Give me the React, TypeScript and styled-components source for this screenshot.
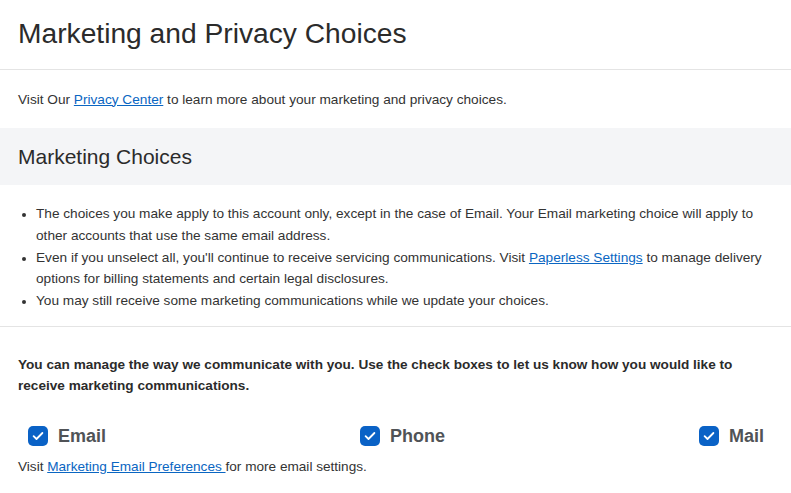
import React from "react";
import styled, { createGlobalStyle } from "styled-components";

const Global = createGlobalStyle`
  html, body { margin: 0; padding: 0; background: #ffffff; }
  body { font-family: "Liberation Sans", Arial, Helvetica, sans-serif; color: #333333; }
  * { box-sizing: border-box; }
`;

const Page = styled.div`
  width: 791px;
  display: flex;
  flex-direction: column;
`;

const Header = styled.header`
  height: 70px;
  padding: 0 18px;
  display: flex;
  align-items: center;
  border-bottom: 1px solid #e4e4e4;
`;

const Title = styled.h1`
  margin: 0;
  padding-bottom: 2px;
  font-size: 28.2px;
  font-weight: 400;
  color: #2b2b2b;
`;

const Intro = styled.p`
  margin: 0;
  height: 58px;
  padding: 0 18px;
  display: flex;
  align-items: center;
  font-size: 13.65px;
  color: #333333;
  & > span { white-space: pre; }
`;

const Link = styled.a`
  color: #0a66c2;
  text-decoration: underline;
  cursor: pointer;
`;

const Band = styled.div`
  height: 57px;
  background: #f4f5f7;
  padding: 0 18px;
  display: flex;
  align-items: center;
`;

const BandTitle = styled.h2`
  margin: 0;
  font-size: 21px;
  font-weight: 400;
  color: #2b2b2b;
`;

const List = styled.ul`
  margin: 0;
  padding: 18px 18px 14px 36px;
  border-bottom: 1px solid #e4e4e4;
  font-size: 13.65px;
  line-height: 21.75px;
  color: #333333;
  li::marker { font-size: 12px; }
`;

const Section = styled.section`
  padding: 27px 18px 0;
`;

const Lead = styled.p`
  margin: 0;
  font-size: 13.6px;
  font-weight: 700;
  line-height: 21px;
  color: #2b2b2b;
`;

const Options = styled.div`
  margin-top: 30px;
  padding: 0 9px 0 10px;
  display: flex;
  justify-content: space-between;
  align-items: center;
`;

const Option = styled.label`
  display: flex;
  align-items: center;
  gap: 10px;
  font-size: 18px;
  font-weight: 700;
  color: #505357;
  cursor: pointer;
`;

const Box = styled.span`
  width: 20px;
  height: 20px;
  border-radius: 5px;
  background: #0a62c6;
  display: flex;
  align-items: center;
  justify-content: center;
`;

const Footnote = styled.p`
  margin: 12px 0 0;
  font-size: 13.6px;
  color: #333333;
`;

const Check = () => (
  <Box>
    <svg width="12" height="10" viewBox="0 0 12 10" fill="none">
      <path d="M1.6 5.2 L4.5 8 L10.4 2" stroke="#ffffff" strokeWidth="1.8" strokeLinecap="round" strokeLinejoin="round" />
    </svg>
  </Box>
);

export default function App() {
  return (
    <Page>
      <Global />
      <Header>
        <Title>Marketing and Privacy Choices</Title>
      </Header>
      <Intro>
        <span>Visit Our </span>
        <Link>Privacy Center</Link>
        <span> to learn more about your marketing and privacy choices.</span>
      </Intro>
      <Band>
        <BandTitle>Marketing Choices</BandTitle>
      </Band>
      <List>
        <li>
          The choices you make apply to this account only, except in the case of Email. Your Email marketing choice will apply to other accounts that use the same email address.
        </li>
        <li>
          Even if you unselect all, you'll continue to receive servicing communications. Visit <Link>Paperless Settings</Link> to manage delivery options for billing statements and certain legal disclosures.
        </li>
        <li>You may still receive some marketing communications while we update your choices.</li>
      </List>
      <Section>
        <Lead>
          You can manage the way we communicate with you. Use the check boxes to let us know how you would like to receive marketing communications.
        </Lead>
        <Options>
          <Option>
            <Check />
            Email
          </Option>
          <Option>
            <Check />
            Phone
          </Option>
          <Option>
            <Check />
            Mail
          </Option>
        </Options>
        <Footnote>
          Visit <Link>Marketing Email Preferences </Link>for more email settings.
        </Footnote>
      </Section>
    </Page>
  );
}
